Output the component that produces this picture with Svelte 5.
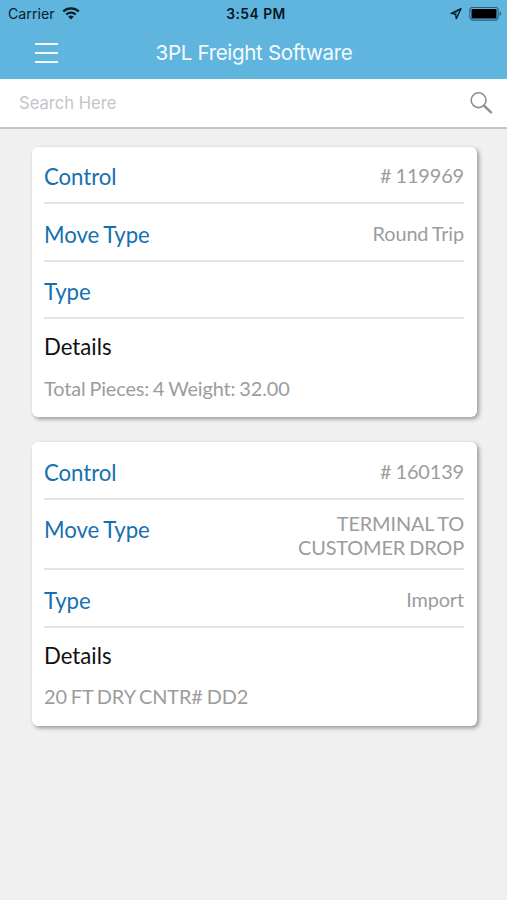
<script lang="ts">
	type Shipment = {
		control: string;
		moveType: string;
		type: string;
		details: string;
	};

	const shipments: Shipment[] = [
		{
			control: '# 119969',
			moveType: 'Round Trip',
			type: '',
			details: 'Total Pieces: 4 Weight: 32.00'
		},
		{
			control: '# 160139',
			moveType: 'TERMINAL TO CUSTOMER DROP',
			type: 'Import',
			details: '20 FT DRY CNTR# DD2'
		}
	];

	let query = $state('');
</script>

{#snippet row(label: string, value: string)}
	<div class="row">
		<span class="label">{label}</span>
		<span class="value">{value}</span>
	</div>
{/snippet}

<div class="app">
	<header>
		<div class="status-bar">
			<div class="carrier">
				<span>Carrier</span>
				<svg width="18" height="13" viewBox="0 0 18 13" fill="none" aria-hidden="true">
					<path d="M1.2 4.5a11.2 11.2 0 0 1 15.6 0" stroke="currentColor" stroke-width="2.3" />
					<path d="M4.2 7.5a7 7 0 0 1 9.6 0" stroke="currentColor" stroke-width="2.1" />
					<path d="M6.2 9.7a4.1 4.1 0 0 1 5.6 0L9 12.6z" fill="currentColor" />
				</svg>
			</div>
			<span class="time">3:54 PM</span>
			<div class="indicators">
				<svg width="12" height="12" viewBox="0 0 12 12" fill="none" aria-hidden="true">
					<path
						d="M11 .6 1.2 5.4l4.4.8.7 4.4z"
						stroke="currentColor"
						stroke-width="1.4"
						stroke-linejoin="round"
					/>
					<path d="M11 .6 1.2 5.4l4.4.8z" fill="currentColor" fill-opacity=".5" />
				</svg>
				<svg width="33" height="14" viewBox="0 0 33 14" fill="none" aria-hidden="true">
					<rect x=".8" y=".5" width="28.4" height="12.6" rx="3" stroke="#28617a" stroke-width="1.1" />
					<rect x="2.5" y="2" width="25" height="9.6" rx="1.2" fill="#000" />
					<path d="M30.6 4.6c2 .5 2 3.9 0 4.4z" fill="#28617a" />
				</svg>
			</div>
		</div>
		<div class="nav-bar">
			<button class="menu" aria-label="Menu">
				<span></span>
				<span></span>
				<span></span>
			</button>
			<h1>3PL Freight Software</h1>
		</div>
	</header>

	<div class="search">
		<input type="text" placeholder="Search Here" bind:value={query} />
		<svg width="24" height="24" viewBox="0 0 24 24" fill="none" aria-hidden="true">
			<circle cx="9.6" cy="9.2" r="7.4" stroke="#8b8e93" stroke-width="1.6" />
			<path d="m15 14.6 7 6.8" stroke="#8b8e93" stroke-width="2.3" stroke-linecap="round" />
		</svg>
	</div>

	<main>
		{#each shipments as shipment}
			<section class="card">
				{@render row('Control', shipment.control)}
				{@render row('Move Type', shipment.moveType)}
				{@render row('Type', shipment.type)}
				<div class="details">
					<h2>Details</h2>
					<p>{shipment.details}</p>
				</div>
			</section>
		{/each}
	</main>
</div>

<style>
	:global(body) {
		margin: 0;
		background: #f0f0f0;
	}

	.app {
		min-height: 900px;
		background: #f0f0f0;
		font-family: Inter, 'Liberation Sans', sans-serif;
	}

	header {
		height: 79px;
		background: #60b5df;
	}

	.status-bar {
		display: grid;
		grid-template-columns: 1fr auto 1fr;
		align-items: center;
		height: 27px;
		padding: 0 5px 0 8px;
		font-size: 14.2px;
		color: #07202c;
	}

	.carrier,
	.indicators {
		display: flex;
		align-items: center;
	}

	.carrier {
		gap: 7px;
	}

	.indicators {
		justify-content: flex-end;
		gap: 7px;
	}

	.time {
		font-weight: 600;
		font-size: 13.8px;
		letter-spacing: 0.5px;
		margin-left: 2px;
		color: #04151e;
	}

	.nav-bar {
		display: grid;
		grid-template-columns: 80px 1fr 80px;
		align-items: center;
		height: 52px;
	}

	.menu {
		display: flex;
		flex-direction: column;
		gap: 7px;
		width: 23px;
		margin-left: 35px;
		padding: 0;
		border: 0;
		background: none;
	}

	.menu span {
		height: 2px;
		background: #f5fbfe;
	}

	h1 {
		margin: 0;
		padding: 0 0 2px 1px;
		font-size: 20.6px;
		font-weight: 400;
		letter-spacing: -0.35px;
		text-align: center;
		color: #f4fbff;
	}

	.search {
		display: flex;
		align-items: center;
		box-sizing: border-box;
		height: 49.5px;
		padding: 0 14px 0 19px;
		border-bottom: 2px solid #c5c5c5;
		background: #fff;
	}

	input {
		flex: 1;
		min-width: 0;
		padding: 0;
		border: 0;
		outline: 0;
		background: none;
		font: 16.6px Inter, 'Liberation Sans', sans-serif;
	}

	input::placeholder {
		color: #c4c4c9;
		opacity: 1;
	}

	main {
		display: flex;
		flex-direction: column;
		gap: 25px;
		padding: 18px 30.5px 24px 31.5px;
		font-family: Lato, sans-serif;
		word-spacing: -1px;
	}

	.card {
		padding: 0 12.5px;
		border-radius: 6px;
		background: #fff;
		box-shadow: 2px 2px 4px rgba(0, 0, 0, 0.38);
	}

	.row {
		display: flex;
		justify-content: space-between;
		padding: 12.5px 0 9px;
		border-bottom: 2px solid #e3e3e3;
	}

	.label {
		line-height: 35px;
		margin-bottom: -1px;
		font-size: 22.2px;
		letter-spacing: -0.05px;
		color: #1670b0;
	}

	.value {
		display: flex;
		align-items: center;
		min-height: 34px;
		max-width: 180px;
		line-height: 23.5px;
		font-size: 19.9px;
		letter-spacing: -0.12px;
		text-align: right;
		color: #9c9c9c;
	}

	.details {
		padding: 13px 0 14.5px;
	}

	h2 {
		margin: 0;
		line-height: 30px;
		font-size: 22.2px;
		font-weight: 400;
		color: #111;
	}

	p {
		margin: 11.5px 0 0;
		line-height: 29px;
		font-size: 19.9px;
		letter-spacing: -0.13px;
		color: #9c9c9c;
	}
</style>
